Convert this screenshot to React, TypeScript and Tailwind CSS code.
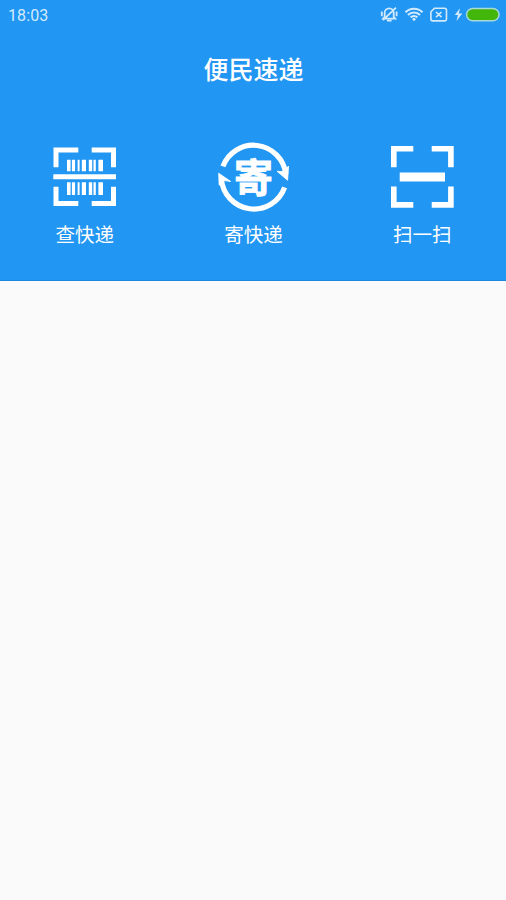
import React from 'react';

const ScanQueryIcon: React.FC = () => (
  <svg width="72" height="72" viewBox="48 141 72 72" fill="none">
    <g stroke="#fff" strokeWidth="5">
      <path d="M78.3 150H56v17.3M91.7 150h21.8v17.3M56 186.7v16.8h22.3M113.5 186.7v16.8H91.7" />
      <path d="M53.3 176.8H116" />
    </g>
    <g fill="#fff">
      <path d="M67 159.8h3.6v11.4H67zM71.9 159.8h3.2v11.4h-3.2zM77.6 159.8h2v11.4h-2zM81.8 159.8h4.2v11.4h-4.2zM88.8 159.8h3.4v11.4h-3.4zM93.5 159.8h2.3v11.4h-2.3zM98.4 159.8h4.6v11.4h-4.6z" />
      <path d="M67 182.3h3.6v12.6H67zM71.9 182.3h3.2v12.6h-3.2zM77.6 182.3h2v12.6h-2zM81.8 182.3h4.2v12.6h-4.2zM88.8 182.3h3.4v12.6h-3.4zM93.5 182.3h2.3v12.6h-2.3zM98.4 182.3h4.6v12.6h-4.6z" />
    </g>
  </svg>
);

const SendIcon: React.FC = () => (
  <svg width="72" height="72" viewBox="217 141 72 72" fill="none">
    <g stroke="#fff" strokeWidth="5.2">
      <path d="M222.9 166.4A32.6 32.6 0 0 1 285.8 174" />
      <path d="M284.6 187.4A32.6 32.6 0 0 1 221.4 179" />
    </g>
    <path d="M277 171.3L287.6 180.3l1-14.3-5.6 5.6zM230.8 181.5L218.7 173.2l.4 12 5.4-4.6z" fill="#fff" stroke="#fff" strokeWidth="0.8" strokeLinejoin="round" />
    <text x="253.5" y="191.8" textAnchor="middle" fontSize="39" fontWeight="700" fill="#fff" stroke="#fff" strokeWidth="0.9">寄</text>
  </svg>
);

const ScanIcon: React.FC = () => (
  <svg width="72" height="72" viewBox="386 141 72 72" fill="none" stroke="#fff" strokeWidth="5.6">
    <path d="M413.3 148.8h-19.5v18.5M431.7 148.8h19.2v18.5M393.8 186.5v18.4h19.5M450.9 186.5v18.4h-19.2" />
    <path d="M399.7 177H445" strokeWidth="9" />
  </svg>
);

const StatusIcons: React.FC = () => (
  <svg width="126" height="20" viewBox="376 5 126 20" fill="none" stroke="#d3eafd" strokeWidth="1.6">
    {/* bell muted */}
    <path d="M384.7 16.8v-4a4.5 4.5 0 0 1 9 0v4l1.6 1.9h-12.2zM381.8 11.6v4.6M396.6 11.6v4.6M387 20.6h4.6M396 7.6l-13 12.6" strokeWidth="1.8" />
    {/* wifi */}
    <path d="M405.5 12.3a12 12 0 0 1 17 0M408 15a8.4 8.4 0 0 1 12 0M410.7 17.4a4.7 4.7 0 0 1 6.6 0" strokeWidth="2.2" />
    <circle cx="414" cy="19.3" r="1.5" fill="#d3eafd" stroke="none" />
    {/* no sim */}
    <path d="M434.5 8.3h10.2a1.8 1.8 0 0 1 1.8 1.8v9a1.8 1.8 0 0 1-1.8 1.8h-12a1.8 1.8 0 0 1-1.8-1.8v-7.3zM436 12l5.5 5.2M441.5 12l-5.5 5.2" />
    <path d="M460 8.3l-5.3 6.8h3.2l-1.4 6 5.8-7.6h-3.5z" fill="#d3eafd" stroke="none" />
    <rect x="466.6" y="8.4" width="32.4" height="12.4" rx="6.2" fill="#43b60b" stroke="#a9d9d8" strokeWidth="1.5" />
  </svg>
);

const actions = [
  { label: '查快递', icon: <ScanQueryIcon /> },
  { label: '寄快递', icon: <SendIcon /> },
  { label: '扫一扫', icon: <ScanIcon /> },
];

export default function App() {
  return (
    <div className="min-h-screen bg-[#fafafa] font-['Noto_Sans_CJK_SC',sans-serif] text-white">
      <header className="h-[281px] border-b border-[#1b87e0] bg-[#2196f3]">
        <div className="flex h-[30px] items-center justify-between pl-2 pr-1">
          <span className="pt-px font-[Roboto,sans-serif] text-[16px] tracking-[0.1px] text-[#d3eafd]">18:03</span>
          <StatusIcons />
        </div>
        <h1 className="flex h-[78px] items-center justify-center pl-px text-[25px] font-medium">便民速递</h1>
        <nav className="grid grid-cols-3 pt-[33px]">
          {actions.map((action) => (
            <button key={action.label} className="flex flex-col items-center">
              {action.icon}
              <span className="mt-[7px] pl-px text-[19.5px] leading-7">{action.label}</span>
            </button>
          ))}
        </nav>
      </header>
    </div>
  );
}
